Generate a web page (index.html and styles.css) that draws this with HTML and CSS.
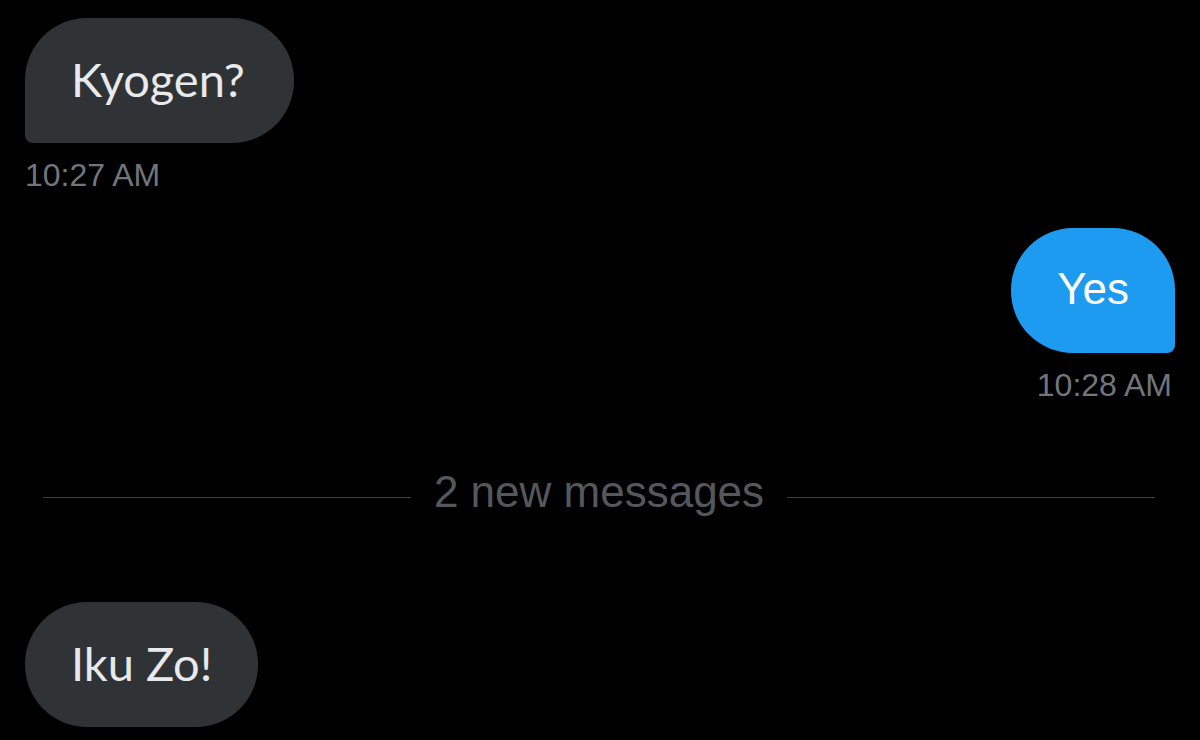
FILE: index.html
```html
<!DOCTYPE html>
<html lang="en">
<head>
<meta charset="utf-8">
<title>Messages</title>
<link rel="stylesheet" href="styles.css">
</head>
<body>
<main class="thread">
  <div class="msg msg-in">
    <div class="bubble bubble-in bubble-tail-left">Kyogen?</div>
    <div class="time">10:27 AM</div>
  </div>
  <div class="msg msg-out">
    <div class="bubble bubble-out">Yes</div>
    <div class="time">10:28 AM</div>
  </div>
  <div class="divider">
    <span class="divider-line"></span>
    <span class="divider-text">2 new messages</span>
    <span class="divider-line"></span>
  </div>
  <div class="msg msg-in msg-last">
    <div class="bubble bubble-in">Iku Zo!</div>
  </div>
</main>
</body>
</html>
```

FILE: styles.css
```css
html, body {
  margin: 0;
  padding: 0;
  background: #000;
  height: 100%;
  overflow: hidden;
}

.thread {
  display: flex;
  flex-direction: column;
  padding: 18px 25px 0;
}

.msg {
  display: flex;
  flex-direction: column;
}

.msg-in { align-items: flex-start; }
.msg-out { align-items: flex-end; margin-top: 37px; }

.bubble {
  display: flex;
  align-items: center;
  box-sizing: border-box;
  height: 125px;
  padding: 0 46px;
  border-radius: 62px;
  white-space: nowrap;
}

.bubble-in {
  background: #2f3336;
  color: #e7e9ea;
  font-family: Lato, "Noto Sans", sans-serif;
  font-size: 47px;
  padding-bottom: 3px;
}

.bubble-tail-left {
  border-bottom-left-radius: 8px;
  padding-right: 49px;
}

.bubble-out {
  background: #1d9bf0;
  color: #fff;
  font-family: "Liberation Sans", Arial, sans-serif;
  font-size: 44px;
  border-bottom-right-radius: 8px;
  padding-bottom: 4px;
}

.time {
  margin-top: 16px;
  font-family: "Liberation Sans", Arial, sans-serif;
  font-size: 32px;
  line-height: 32px;
  color: #71767b;
}

.msg-out .time { margin-right: 3px; }

.divider {
  display: flex;
  align-items: center;
  gap: 23px;
  margin: 69px 20px 0 18px;
}

.divider-line {
  flex: 1;
  height: 1px;
  background: #3f4347;
}

.divider-text {
  font-family: "Liberation Sans", Arial, sans-serif;
  font-size: 44px;
  line-height: 44px;
  padding-bottom: 11px;
  color: #54585c;
}

.msg-last { margin-top: 77px; }
```
